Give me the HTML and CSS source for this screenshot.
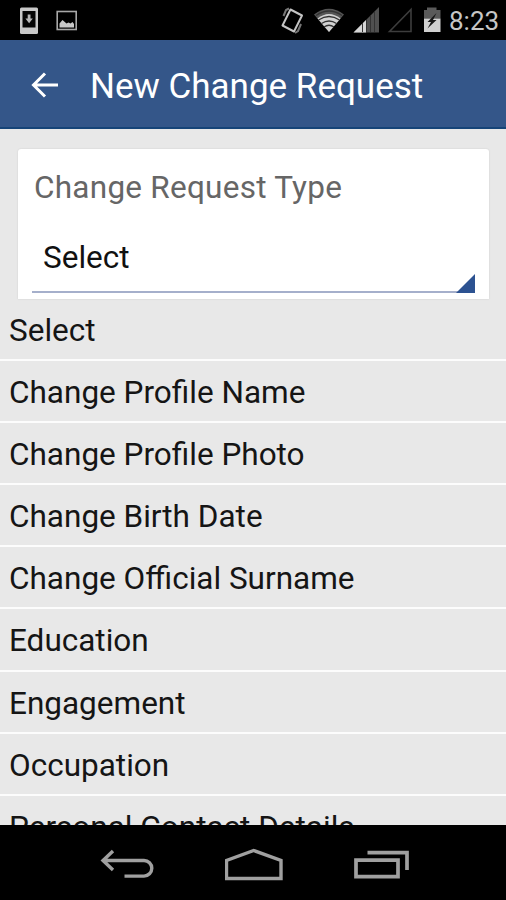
FILE: index.html
```html
<!DOCTYPE html>
<html lang="en">
  <head>
    <meta charset="UTF-8" />
    <meta name="viewport" content="width=device-width, initial-scale=1.0" />
    <title>New Change Request</title>
    <link rel="stylesheet" href="styles.css" />
  </head>
  <body>
    <div class="status-bar">
      <svg class="status-icons" width="120" height="40" viewBox="0 0 120 40">
        <rect x="20" y="7.5" width="18" height="26.500" rx="1.500" fill="#c8c8c8" />
        <rect x="22.500" y="11" width="13" height="16.500" fill="#050505" />
        <path d="M27.700 14.500h2.800v4h2.300l-3.700 4.700-3.700-4.700h2.300z" fill="#b8b8b8" />
        <rect x="57.200" y="11.500" width="19" height="18" fill="none" stroke="#a8a8a8" stroke-width="1.600" />
        <path d="M59.500 27.500v-4l3-3.500 4 3.500 2-1 2 1 2-1.500 1.500 2v3.500z" fill="#c8c8c8" />
      </svg>
      <svg class="status-icons" width="170" height="40" viewBox="276 0 170 40">
        <!-- vibrate -->
        <g fill="none" stroke="#c4c4c4">
          <path d="M290.500 9.500L302 15.500 294 31.500 282.500 25.500z" stroke-width="2" stroke-linejoin="round" />
          <path d="M283.500 16l2.500-6 3-1.500M301 24l-3 7-3 2" stroke="#777" stroke-width="2" />
        </g>
        <!-- wifi -->
        <path d="M314 14.500Q329 3 344 14.500L329 32z" fill="#555" />
        <path d="M317.500 18.500Q329 9.500 340.500 18.500L329 32z" fill="#d2d2d2" />
        <g fill="none" stroke="#333" stroke-width="1.300">
          <path d="M316 15.500Q329 6.500 342 15.500" />
          <path d="M318.500 20Q329 13 339.500 20" />
          <path d="M321.500 23.500Q329 18.500 336.500 23.500" />
          <path d="M324 27Q329 23.500 334 27" />
        </g>
        <!-- signal -->
        <path d="M353.500 32.500L379 7v25.500z" fill="#505050" />
        <path d="M353.500 32.500L366 20v12.500z" fill="#d6d6d6" />
        <path d="M362.500 23v9M366.500 20v12M370.500 16v16M374.500 12v20" stroke="#333" stroke-width="1" />
        <path d="M389.500 31.500L411 9.500v22z" fill="none" stroke="#3d3d3d" stroke-width="1.600" />
        <!-- battery -->
        <path d="M424 10h3V7.500h9.500V10h4v8.500H424z" fill="#5a5a5a" />
        <path d="M424 18.500h16.500V32H424z" fill="#d0d0d0" />
        <path d="M436.500 13l-9 9h3.500l-3.500 6.500 9-8.500h-3.500z" fill="#181818" />
      </svg>
      <span class="clock">8:23</span>
    </div>

    <header class="toolbar">
      <svg class="back" width="28" height="26" viewBox="0 0 28 26">
        <path d="M14 1.500L2.500 13 14 24.500M2.500 13H27" fill="none" stroke="#fff" stroke-width="3" />
      </svg>
      <h1>New Change Request</h1>
    </header>

    <main class="content">
      <section class="card">
        <label class="card-label">Change Request Type</label>
        <div class="spinner">
          <span>Select</span>
          <svg class="spinner-mark" width="19" height="19" viewBox="0 0 19 19">
            <path d="M0 19L19 0v19z" fill="#2c5291" />
          </svg>
        </div>
      </section>

      <ul class="options">
        <li>Select</li>
        <li>Change Profile Name</li>
        <li>Change Profile Photo</li>
        <li>Change Birth Date</li>
        <li>Change Official Surname</li>
        <li>Education</li>
        <li>Engagement</li>
        <li>Occupation</li>
        <li>Personal Contact Details</li>
      </ul>
    </main>

    <nav class="nav-bar">
      <svg width="56" height="32" viewBox="0 0 56 32">
        <path d="M13 2L3 11.500 13 21M3 11.500H44a7.800 7.800 0 0 1 0 15.600H24.500" fill="none" stroke="#a0a0a0" stroke-width="3.400" />
      </svg>
      <svg width="60" height="34" viewBox="0 0 60 34">
        <path d="M1.500 30.500V12.500L28.700 2.500l27.300 10v18z" fill="none" stroke="#a0a0a0" stroke-width="3.400" />
      </svg>
      <svg width="56" height="30" viewBox="0 0 56 30">
        <path d="M2 10.200h42v16.500H2zM13.500 2.700H53V20" fill="none" stroke="#a0a0a0" stroke-width="3.700" />
      </svg>
    </nav>
  </body>
</html>
```

FILE: styles.css
```css
* {
  box-sizing: border-box;
}

body {
  margin: 0;
  height: 900px;
  display: flex;
  flex-direction: column;
  overflow: hidden;
  background-color: #000;
  font-family: Roboto, "Liberation Sans", sans-serif;
}

.status-bar {
  height: 40px;
  flex: none;
  display: flex;
  justify-content: space-between;
  background-color: #000;
}

.status-bar .status-icons:nth-child(2) {
  margin-left: auto;
}

.clock {
  width: 60px;
  padding-left: 3px;
  line-height: 43px;
  font-size: 26px;
  color: #c6c6c6;
}

.toolbar {
  height: 89px;
  flex: none;
  display: flex;
  align-items: center;
  padding: 2px 0 0 31px;
  background-color: #345689;
  border-bottom: 2px solid #164478;
}

.toolbar h1 {
  margin: 0 0 0 31px;
  padding-top: 4px;
  font-size: 35px;
  font-weight: 400;
  line-height: 60px;
  color: #fff;
  white-space: nowrap;
}

.content {
  flex: 1;
  min-height: 0;
  overflow: hidden;
  background-color: #e8e8e8;
}

.card {
  height: 150px;
  margin: 20px 17px 0 18px;
  padding: 14px 14px 0;
  background-color: #fff;
  border-radius: 3px 3px 0 0;
  box-shadow: 0 0 2px rgba(0, 0, 0, 0.12);
}

.card-label {
  display: block;
  padding-left: 2px;
  font-size: 31.5px;
  letter-spacing: 0.25px;
  line-height: 49px;
  color: #666;
}

.spinner {
  display: flex;
  justify-content: space-between;
  align-items: flex-end;
  height: 81px;
  padding-left: 11px;
  border-bottom: 2px solid #a5afcb;
  font-size: 31.5px;
  line-height: 66px;
  color: #111;
}

.spinner-mark {
  margin-bottom: -2px;
}

.options {
  margin: 0;
  padding: 0;
  list-style: none;
}

.options li {
  height: 62.1px;
  padding-left: 9px;
  border-bottom: 2px solid #fcfcfc;
  font-size: 31.5px;
  line-height: 63px;
  color: #151515;
  white-space: nowrap;
}

.nav-bar {
  height: 75px;
  flex: none;
  display: flex;
  justify-content: space-between;
  align-items: center;
  padding: 4px 96px 0 100px;
  background-color: #000;
}
```
